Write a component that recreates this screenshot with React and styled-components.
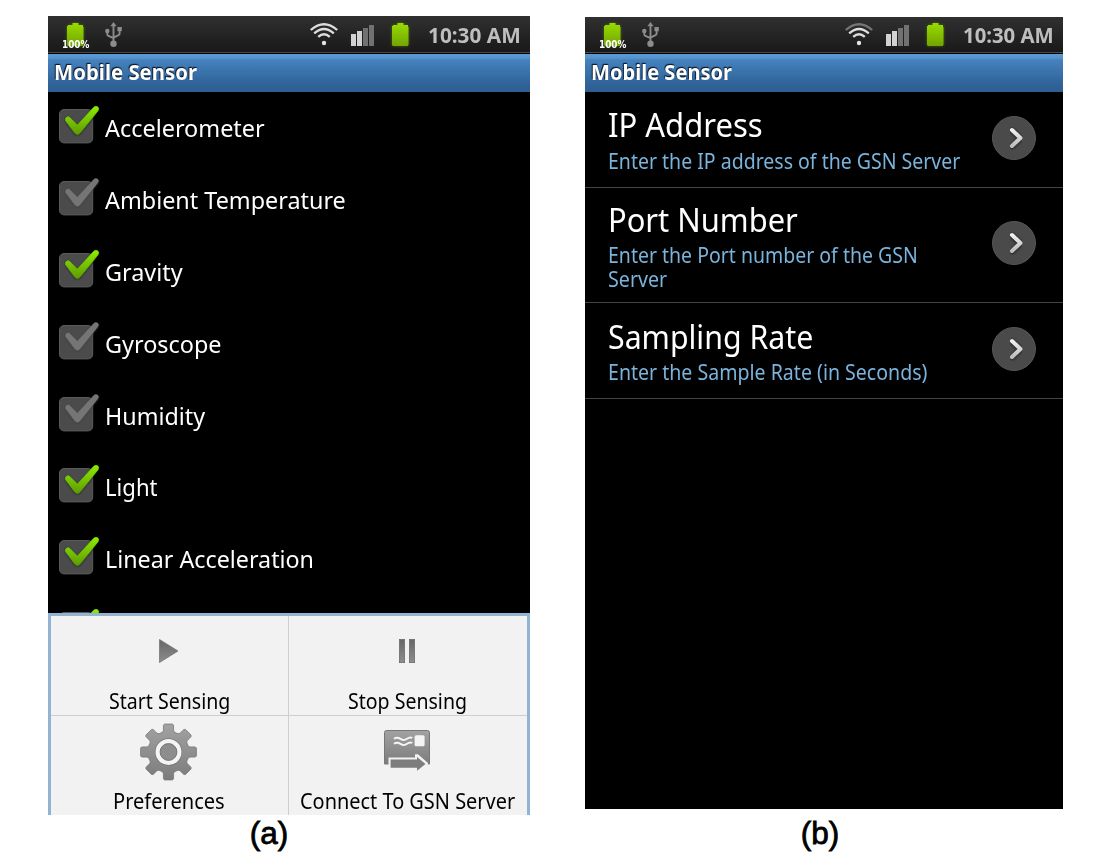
import React, { useLayoutEffect, useRef, useState } from 'react';
import styled, { createGlobalStyle } from 'styled-components';

const GlobalStyle = createGlobalStyle`
  body { margin: 0; background: #fff; font-family: "Noto Sans", "Open Sans", sans-serif; }
  svg { display: block; flex: none; }
`;

/* Text squeezed horizontally to the narrow proportions of the handset font */
const FitBox = styled.span`
  display: block;
  flex: none;
  width: ${p => p.$w}px;
  white-space: nowrap;
`;
const FitInner = styled.span`
  display: inline-block;
  transform-origin: 0 50%;
`;
function Fit({ w, children }) {
  const ref = useRef(null);
  const [scale, setScale] = useState(1);
  useLayoutEffect(() => {
    setScale(w / ref.current.offsetWidth);
  }, [w, children]);
  return (
    <FitBox $w={w}>
      <FitInner ref={ref} style={{ transform: `scaleX(${scale})` }}>{children}</FitInner>
    </FitBox>
  );
}

const Page = styled.div`
  width: 1096px;
  height: 858px;
  box-sizing: border-box;
  padding: 16px 33px 0 48px;
  display: flex;
  justify-content: space-between;
  align-items: flex-start;
  overflow: hidden;
`;
const Figure = styled.section`
  width: ${p => p.$w}px;
  padding-top: ${p => p.$top || 0}px;
  display: flex;
  flex-direction: column;
  align-items: center;
`;
const Screen = styled.div`
  width: 100%;
  height: ${p => p.$h}px;
  background: #000;
  display: flex;
  flex-direction: column;
  overflow: hidden;
`;
const Caption = styled.div`
  font: 31.5px/36px "Liberation Sans", Arial, sans-serif;
  color: #000;
  -webkit-text-stroke: 0.8px #000;
  margin-top: ${p => p.$top}px;
  margin-left: ${p => p.$shift}px;
`;

const StatusBar = styled.div`
  height: ${p => p.$h}px;
  box-sizing: border-box;
  flex: none;
  display: flex;
  align-items: flex-end;
  background: linear-gradient(#303030, #191919);
  border-bottom: 1px solid #4a4a4a;
  margin-bottom: 1px;
  padding: 0 0 4px ${p => p.$left}px;
`;
const Spacer = styled.div`
  width: ${p => p.$w}px;
  flex: none;
`;
const Clock = styled.div`
  font-size: 21px;
  line-height: 26px;
  font-weight: 700;
  color: #bebebe;
`;
const TitleBar = styled.div`
  height: 38px;
  flex: none;
  box-sizing: border-box;
  padding-left: 6px;
  background: linear-gradient(#5d9bd6 0, #5593cf 4px, #4582bd 6px, #2f6399 30px, #2d5f92 100%);
  color: #fff;
  font-size: 21px;
  font-weight: 700;
  line-height: 37px;
  text-shadow: -1px -1px 1px #0b1c30, 0 -1px 1px #0b1c30;
`;

const CheckList = styled.div`
  height: 521px;
  flex: none;
  overflow: hidden;
`;
const CheckRow = styled.div`
  height: 71.9px;
  box-sizing: border-box;
  padding-left: 11px;
  display: flex;
  align-items: center;
  gap: 5px;
  color: #fff;
  font-size: 24px;
  line-height: 32px;
`;

const Menu = styled.div`
  flex: 1;
  box-sizing: border-box;
  border: 3px solid #93b3d4;
  border-bottom: 0;
  background: #cfcfcf;
  display: grid;
  grid-template-columns: 237px 238px;
  grid-template-rows: 99px 99px;
  gap: 1px;
`;
const MenuCell = styled.div`
  background: #f2f2f2;
  color: #000;
  box-sizing: border-box;
  padding-right: 1px;
  display: flex;
  flex-direction: column;
  align-items: center;
  font-size: 21.5px;
  line-height: 28px;
`;
const MenuIcon = styled.div`
  height: 71px;
  flex: none;
  display: flex;
  align-items: center;
`;

const PrefRow = styled.div`
  height: ${p => p.$h}px;
  flex: none;
  box-sizing: border-box;
  border-bottom: 1px solid #444;
  padding: 0 27px ${p => p.$bottom}px 23px;
  display: flex;
  justify-content: space-between;
  align-items: center;
`;
const PrefText = styled.div`
  align-self: flex-start;
  padding-top: ${p => p.$top}px;
`;
const PrefTitle = styled.div`
  color: #fff;
  font-size: 32.5px;
  line-height: 40px;
`;
const PrefSummary = styled.div`
  color: #7ab3dc;
  font-size: 21px;
  line-height: 24px;
  margin-top: ${p => p.$gap}px;
`;

const GREEN = 'url(#green)';

function Defs() {
  return (
    <svg width="0" height="0" style={{ position: 'absolute' }}>
      <defs>
        <linearGradient id="green" x1="0" y1="0" x2="0" y2="1">
          <stop offset="0" stopColor="#98dc00" /><stop offset="1" stopColor="#72a400" />
        </linearGradient>
        <linearGradient id="tick" gradientUnits="userSpaceOnUse" x1="0" y1="0" x2="0" y2="28">
          <stop offset="0" stopColor="#8cee00" /><stop offset="1" stopColor="#5f9c00" />
        </linearGradient>
        <linearGradient id="grayDown" x1="0" y1="0" x2="0" y2="1">
          <stop offset="0" stopColor="#a2a2a2" /><stop offset="1" stopColor="#7c7c7c" />
        </linearGradient>
        <linearGradient id="grayUp" x1="0" y1="0" x2="0" y2="1">
          <stop offset="0" stopColor="#666" /><stop offset="1" stopColor="#8d8d8d" />
        </linearGradient>
        <linearGradient id="silver" x1="0" y1="0" x2="0" y2="1">
          <stop offset="0" stopColor="#f0f0f0" /><stop offset="1" stopColor="#bcbcbc" />
        </linearGradient>
        <filter id="glow" x="-40%" y="-30%" width="180%" height="160%">
          <feGaussianBlur stdDeviation="1.8" />
        </filter>
        <filter id="soft" x="-20%" y="-20%" width="140%" height="140%">
          <feGaussianBlur stdDeviation="0.9" />
        </filter>
      </defs>
    </svg>
  );
}

const CELL = 'M1 2H5.5V0H11.5V2H16V4H16.5V22H16V23H.5V22H0V3H1Z';

const BadgeText = styled.span`
  position: absolute;
  left: 0;
  bottom: -1px;
  color: #fff;
  font: 700 10.5px/10px "DejaVu Sans", sans-serif;
`;
const BatteryBox = styled.div`
  position: relative;
  width: 27px;
  height: 24px;
  display: flex;
  justify-content: center;
  padding-bottom: 1px;
`;
function Battery() {
  return (
    <svg width="17" height="23" overflow="visible">
      <path d={CELL} fill="#5c9000" opacity=".7" filter="url(#glow)" />
      <path d={CELL} fill={GREEN} />
    </svg>
  );
}
function BatteryLevel() {
  return (
    <BatteryBox>
      <Battery />
      <BadgeText><Fit w={27}>100%</Fit></BadgeText>
    </BatteryBox>
  );
}
function Usb() {
  return (
    <svg width="17" height="25" fill="none" stroke="#8c8c8c" strokeWidth="1.9">
      <path d="M8.5 3V21M2.3 9V12.2Q2.3 13.3 3.4 13.8L8.5 16.2M14.6 8V11.4Q14.6 12.6 13.5 13.1L8.5 15.6" />
      <path d="M8.5 0L11.6 4.2H5.4Z" fill="#8c8c8c" stroke="none" />
      <circle cx="2.3" cy="9" r="2.2" fill="#8c8c8c" stroke="none" />
      <rect x="12.4" y="5" width="4.4" height="4.2" fill="#8c8c8c" stroke="none" />
      <circle cx="8.5" cy="21.7" r="3.2" fill="#8c8c8c" stroke="none" />
    </svg>
  );
}
function Wifi({ dimOuter }) {
  return (
    <svg width="28" height="23" fill="none" stroke="#dedede" strokeWidth="2.3">
      <path d="M.8 7Q14 -4.6 27.2 7" stroke={dimOuter ? '#757575' : '#dedede'} />
      <path d="M4.2 10.4Q14 1.6 23.8 10.4" />
      <path d="M8.2 13.9Q14 8.6 19.8 13.9" />
      <circle cx="14" cy="20" r="2.2" fill="#e4e4e4" stroke="none" />
    </svg>
  );
}
function Signal() {
  return (
    <svg width="23" height="22">
      <rect x="0" y="10" width="5" height="12" fill="#d2d2d2" />
      <rect x="6" y="7" width="5" height="15" fill="#d2d2d2" />
      <rect x="12" y="4" width="5" height="18" fill="#717171" />
      <rect x="18" y="1" width="5" height="21" fill="#717171" />
    </svg>
  );
}
const Lift = styled.div`
  margin-bottom: ${p => p.$by}px;
`;

function Status({ h, left, wifiGap, clockW, dimOuter }) {
  return (
    <StatusBar $h={h} $left={left}>
      <BatteryLevel />
      <Spacer $w={16} />
      <Lift $by={1}><Usb /></Lift>
      <Spacer $w={wifiGap} />
      <Lift $by={2}><Wifi dimOuter={dimOuter} /></Lift>
      <Spacer $w={13} />
      <Lift $by={2}><Signal /></Lift>
      <Spacer $w={18} />
      <Lift $by={2}><Battery /></Lift>
      <Spacer $w={19} />
      <Clock><Fit w={clockW}>10:30 AM</Fit></Clock>
    </StatusBar>
  );
}

/* The two arms of the tick widen toward the elbow */
const TICK = 'M6.4 14.4Q6 11.4 8.6 10.8Q10 10.4 11.6 12.2L18.4 19L34.6 1.4Q36.6 -.4 38.8 .9Q40.6 2.6 38.8 5L21.2 26.8Q18.4 30 15.6 26.8Z';
function CheckBox({ on }) {
  return (
    <svg width="41" height="44">
      <rect x=".5" y="3.5" width="33.2" height="33.4" rx="4.5" fill="#4b4b4b" stroke="#5a5a5a" />
      <path d={TICK} transform="translate(0 .8)" fill={on ? '#1c1c1c' : '#404040'} opacity=".8" filter="url(#soft)" />
      <path
        d={TICK}
        fill={on ? 'url(#tick)' : '#757575'}
        stroke={on ? 'url(#tick)' : 'none'}
        strokeWidth=".7"
        strokeLinejoin="round"
      />
    </svg>
  );
}

function Play() {
  return (
    <svg width="20" height="25">
      <path d="M.5 .5L19 12L.5 23.5Z" fill="url(#grayUp)" stroke="#777" strokeWidth=".8" />
    </svg>
  );
}
function Pause() {
  return (
    <svg width="18" height="25">
      <g fill="url(#grayUp)" stroke="#6d6d6d" strokeWidth=".8">
        <rect x=".4" y=".4" width="5.2" height="23.2" />
        <rect x="10.4" y=".4" width="5.2" height="23.2" />
      </g>
    </svg>
  );
}
function Gear() {
  const points = [];
  for (let i = 0; i < 8; i++) {
    const a = (i * Math.PI) / 4 - Math.PI / 2;
    [[20.6, -0.3], [22, -0.235], [27.4, -0.185], [28.2, -0.14], [28.2, 0.14], [27.4, 0.185], [22, 0.235], [20.6, 0.3]]
      .forEach(([r, d]) => points.push(`${(28.5 + r * Math.cos(a + d)).toFixed(2)},${(29 + r * Math.sin(a + d)).toFixed(2)}`));
  }
  return (
    <svg width="58" height="58">
      <polygon points={points.join(' ')} fill="url(#grayDown)" stroke="#777" strokeWidth=".8" strokeLinejoin="round" />
      <circle cx="28.5" cy="29" r="13.8" fill="#777" />
      <circle cx="28.5" cy="29" r="13" fill="#f4f4f4" />
      <circle cx="28.5" cy="29" r="8.4" fill="#8d8d8d" stroke="#737373" strokeWidth="1" />
    </svg>
  );
}
function Envelope() {
  return (
    <svg width="47" height="43">
      <path d="M2.5 .5H43.5Q45.5 .5 45.5 2.5V34H.5V2.5Q.5 .5 2.5 .5Z" fill="url(#grayDown)" stroke="#777" />
      <path d="M4.5 34.6V27.6H31V24.2L34 24.2L44 33V35H46V43H4.5Z" fill="#f2f2f2" />
      <path d="M6.6 29.6H33V27L41.5 34L33 40.8V37.8H6.6Z" fill="#7d7d7d" />
      <rect x="30.6" y="5.2" width="10" height="11" rx="1.5" fill="#f4f4f4" />
      <g fill="none" stroke="#f4f4f4" strokeWidth="2">
        <path d="M10 8.8Q13 6.6 16.5 8.8T23 8.8T28.3 8" />
        <path d="M10 13.8Q13 11.6 16.5 13.8T23 13.8T28.3 13" />
      </g>
    </svg>
  );
}
function Chevron() {
  return (
    <svg width="44" height="44" fill="none" strokeLinecap="round" strokeLinejoin="round">
      <circle cx="22" cy="22" r="21.5" fill="#4a4a4a" stroke="#565656" />
      <path d="M20.2 14.8L28.2 22.6L20.2 30.6" stroke="#222" strokeWidth="5" filter="url(#soft)" />
      <path d="M20 14L28.4 22L20 30" stroke="url(#silver)" strokeWidth="4" />
    </svg>
  );
}

const SENSORS = [
  ['Accelerometer', 160, true],
  ['Ambient Temperature', 240.5, false],
  ['Gravity', 78, true],
  ['Gyroscope', 117, false],
  ['Humidity', 100, false],
  ['Light', 52.5, true],
  ['Linear Acceleration', 209.5, true],
];
const ACTIONS = [
  ['Start Sensing', 121, Play],
  ['Stop Sensing', 119, Pause],
  ['Preferences', 112, Gear],
  ['Connect To GSN Server', 215, Envelope],
];
const PREFS = [
  { title: 'IP Address', w: 154.5, h: 96, top: 13, gap: 4, bottom: 3, lines: [['Enter the IP address of the GSN Server', 352]] },
  { title: 'Port Number', w: 190, h: 115, top: 12, gap: 3, bottom: 4, lines: [['Enter the Port number of the GSN', 310], ['Server', 59]] },
  { title: 'Sampling Rate', w: 205, h: 96, top: 14, gap: 3, bottom: 3, lines: [['Enter the Sample Rate (in Seconds)', 319.5]] },
];

export default function App() {
  return (
    <Page>
      <GlobalStyle />
      <Defs />
      <Figure $w={482}>
        <Screen $h={799}>
          <Status h={37} left={14} wifiGap={188} clockW={93} />
          <TitleBar><Fit w={143.5}>Mobile Sensor</Fit></TitleBar>
          <CheckList>
            {SENSORS.map(([name, w, on]) => (
              <CheckRow key={name}><CheckBox on={on} /><Fit w={w}>{name}</Fit></CheckRow>
            ))}
            <CheckRow><CheckBox on /></CheckRow>
          </CheckList>
          <Menu>
            {ACTIONS.map(([name, w, Icon]) => (
              <MenuCell key={name}>
                <MenuIcon><Icon /></MenuIcon>
                <Fit w={w}>{name}</Fit>
              </MenuCell>
            ))}
          </Menu>
        </Screen>
        <Caption $top={0} $shift={-40}>(a)</Caption>
      </Figure>
      <Figure $w={478} $top={1}>
        <Screen $h={792}>
          <Status h={36} left={14} wifiGap={186} clockW={91} dimOuter />
          <TitleBar><Fit w={141.5}>Mobile Sensor</Fit></TitleBar>
          {PREFS.map(p => (
            <PrefRow key={p.title} $h={p.h} $bottom={p.bottom}>
              <PrefText $top={p.top}>
                <PrefTitle><Fit w={p.w}>{p.title}</Fit></PrefTitle>
                <PrefSummary $gap={p.gap}>
                  {p.lines.map(([text, w]) => <Fit key={text} w={w}>{text}</Fit>)}
                </PrefSummary>
              </PrefText>
              <Chevron />
            </PrefRow>
          ))}
        </Screen>
        <Caption $top={6} $shift={-8}>(b)</Caption>
      </Figure>
    </Page>
  );
}
